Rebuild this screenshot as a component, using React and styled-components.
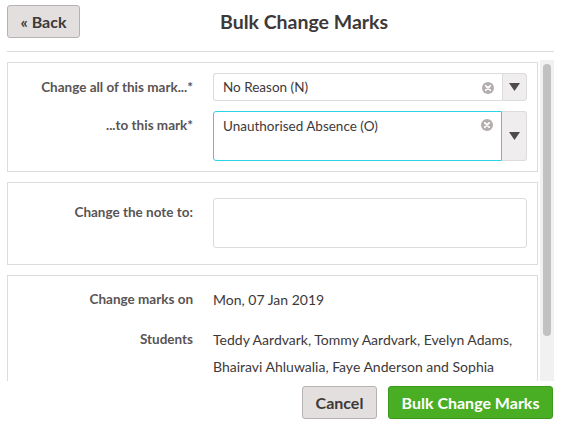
import React from "react";
import styled, { createGlobalStyle } from "styled-components";

const Global = createGlobalStyle`
  html, body { margin: 0; padding: 0; background: #fff; }
  body { font-family: Lato, "Open Sans", sans-serif; color: #3d3939; }
  * { box-sizing: border-box; }
`;

const Page = styled.div`
  width: 561px;
  height: 427px;
  padding: 5px 7px 0 7px;
  display: flex;
  flex-direction: column;
`;

const Header = styled.div`
  display: flex;
  align-items: center;
  height: 33px;
`;

const Button = styled.button`
  font-family: Lato, sans-serif;
  font-weight: 700;
  font-size: ${(p) => p.$size || 16}px;
  height: 33px;
  padding: 0 ${(p) => p.$pad || 12}px;
  border-radius: 3px;
  border: 1px solid ${(p) => (p.$primary ? "#3c9a1b" : "#b7b1b1")};
  background: ${(p) => (p.$primary ? "#4aae25" : "#e3dfdf")};
  color: ${(p) => (p.$primary ? "#fff" : "#3d3939")};
  width: ${(p) => p.$w}px;
  white-space: nowrap;
`;

const Title = styled.h1`
  margin: 0 0 0 140px;
  font-size: 19.5px;
  font-weight: 700;
  color: #3d3939;
`;

const Divider = styled.div`
  height: 1px;
  background: #dcdcdc;
  margin-top: 13px;
`;

const ScrollArea = styled.div`
  margin-top: 8px;
  height: 321px;
  display: flex;
  gap: 2px;
`;

const Content = styled.div`
  width: 533px;
  overflow: hidden;
  display: flex;
  flex-direction: column;
  gap: 10px;
  padding-top: 2px;
`;

const Track = styled.div`
  width: 14px;
  background: #f1f1f1;
  padding: 4px 3px;
  display: flex;
`;

const Thumb = styled.div`
  width: 9px;
  height: 272px;
  border-radius: 5px;
  background: #c1c1c1;
`;

const Panel = styled.div`
  border: 1px solid #dcdcdc;
  padding: ${(p) => p.$pad};
  display: grid;
  grid-template-columns: 185px 1fr;
  column-gap: 20px;
  row-gap: ${(p) => p.$gap || 10}px;
  flex-shrink: 0;
`;

const Label = styled.div`
  text-align: right;
  font-weight: 700;
  font-size: 13.5px;
  color: #5a5454;
  line-height: ${(p) => p.$lh || 28}px;
`;

const Value = styled.div`
  font-size: 14px;
  line-height: 27px;
  color: #3d3939;
`;

const Select = styled.div`
  display: flex;
  height: ${(p) => p.$h}px;
`;

const SelectBox = styled.div`
  flex: 1;
  display: flex;
  justify-content: space-between;
  align-items: ${(p) => (p.$tall ? "flex-start" : "center")};
  padding: ${(p) => (p.$tall ? "6px 8px 0 9px" : "0 8px 0 9px")};
  border: 1px solid ${(p) => (p.$focus ? "#2ad3e6" : "#dcdcdc")};
  border-right: ${(p) => (p.$focus ? "1px solid #2ad3e6" : "none")};
  border-radius: 3px 0 0 3px;
  font-size: 13.5px;
  color: #3d3939;
  line-height: 16px;
`;

const Arrow = styled.div`
  width: 25px;
  border: 1px solid #dcdcdc;
  border-left: ${(p) => (p.$focus ? "none" : "1px solid #dcdcdc")};
  border-radius: 0 3px 3px 0;
  background: #efeded;
  display: flex;
  align-items: center;
  justify-content: center;
`;

const TextArea = styled.div`
  height: 50px;
  border: 1px solid #dcdcdc;
  border-radius: 3px;
`;

const Footer = styled.div`
  display: flex;
  justify-content: flex-end;
  gap: 11px;
  margin-top: 5px;
  padding-right: 1px;
`;

const ClearIcon = () => (
  <svg width="12" height="12" viewBox="0 0 12 12" style={{ flexShrink: 0, marginTop: 1 }}>
    <circle cx="6" cy="6" r="6" fill="#b3adad" />
    <path d="M3.8 3.8 L8.2 8.2 M8.2 3.8 L3.8 8.2" stroke="#fff" strokeWidth="1.8" strokeLinecap="round" />
  </svg>
);

const Caret = () => (
  <svg width="11" height="8" viewBox="0 0 11 8">
    <path d="M0 0 H11 L5.5 8 Z" fill="#504b4b" />
  </svg>
);

export default function App() {
  return (
    <>
      <Global />
      <Page>
        <Header>
          <Button $w={73} $size={16}>« Back</Button>
          <Title>Bulk Change Marks</Title>
        </Header>
        <Divider />
        <ScrollArea>
          <Content>
            <Panel $pad="10px 10px 10px 0">
              <Label>Change all of this mark...*</Label>
              <Select $h={28}>
                <SelectBox>
                  <span>No Reason (N)</span>
                  <ClearIcon />
                </SelectBox>
                <Arrow>
                  <Caret />
                </Arrow>
              </Select>
              <Label>...to this mark*</Label>
              <Select $h={50}>
                <SelectBox $tall $focus>
                  <span>Unauthorised Absence (O)</span>
                  <ClearIcon />
                </SelectBox>
                <Arrow $focus>
                  <Caret />
                </Arrow>
              </Select>
            </Panel>
            <Panel $pad="15px 10px 16px 0">
              <Label>Change the note to:</Label>
              <TextArea />
            </Panel>
            <Panel $pad="10px 10px 10px 0" $gap={13}>
              <Label $lh={27}>Change marks on</Label>
              <Value>Mon, 07 Jan 2019</Value>
              <Label $lh={27}>Students</Label>
              <Value>
                Teddy Aardvark, Tommy Aardvark, Evelyn Adams, Bhairavi Ahluwalia, Faye Anderson and Sophia
                Anderson
              </Value>
            </Panel>
          </Content>
          <Track>
            <Thumb />
          </Track>
        </ScrollArea>
        <Footer>
          <Button $w={75}>Cancel</Button>
          <Button $w={165} $primary>Bulk Change Marks</Button>
        </Footer>
      </Page>
    </>
  );
}
